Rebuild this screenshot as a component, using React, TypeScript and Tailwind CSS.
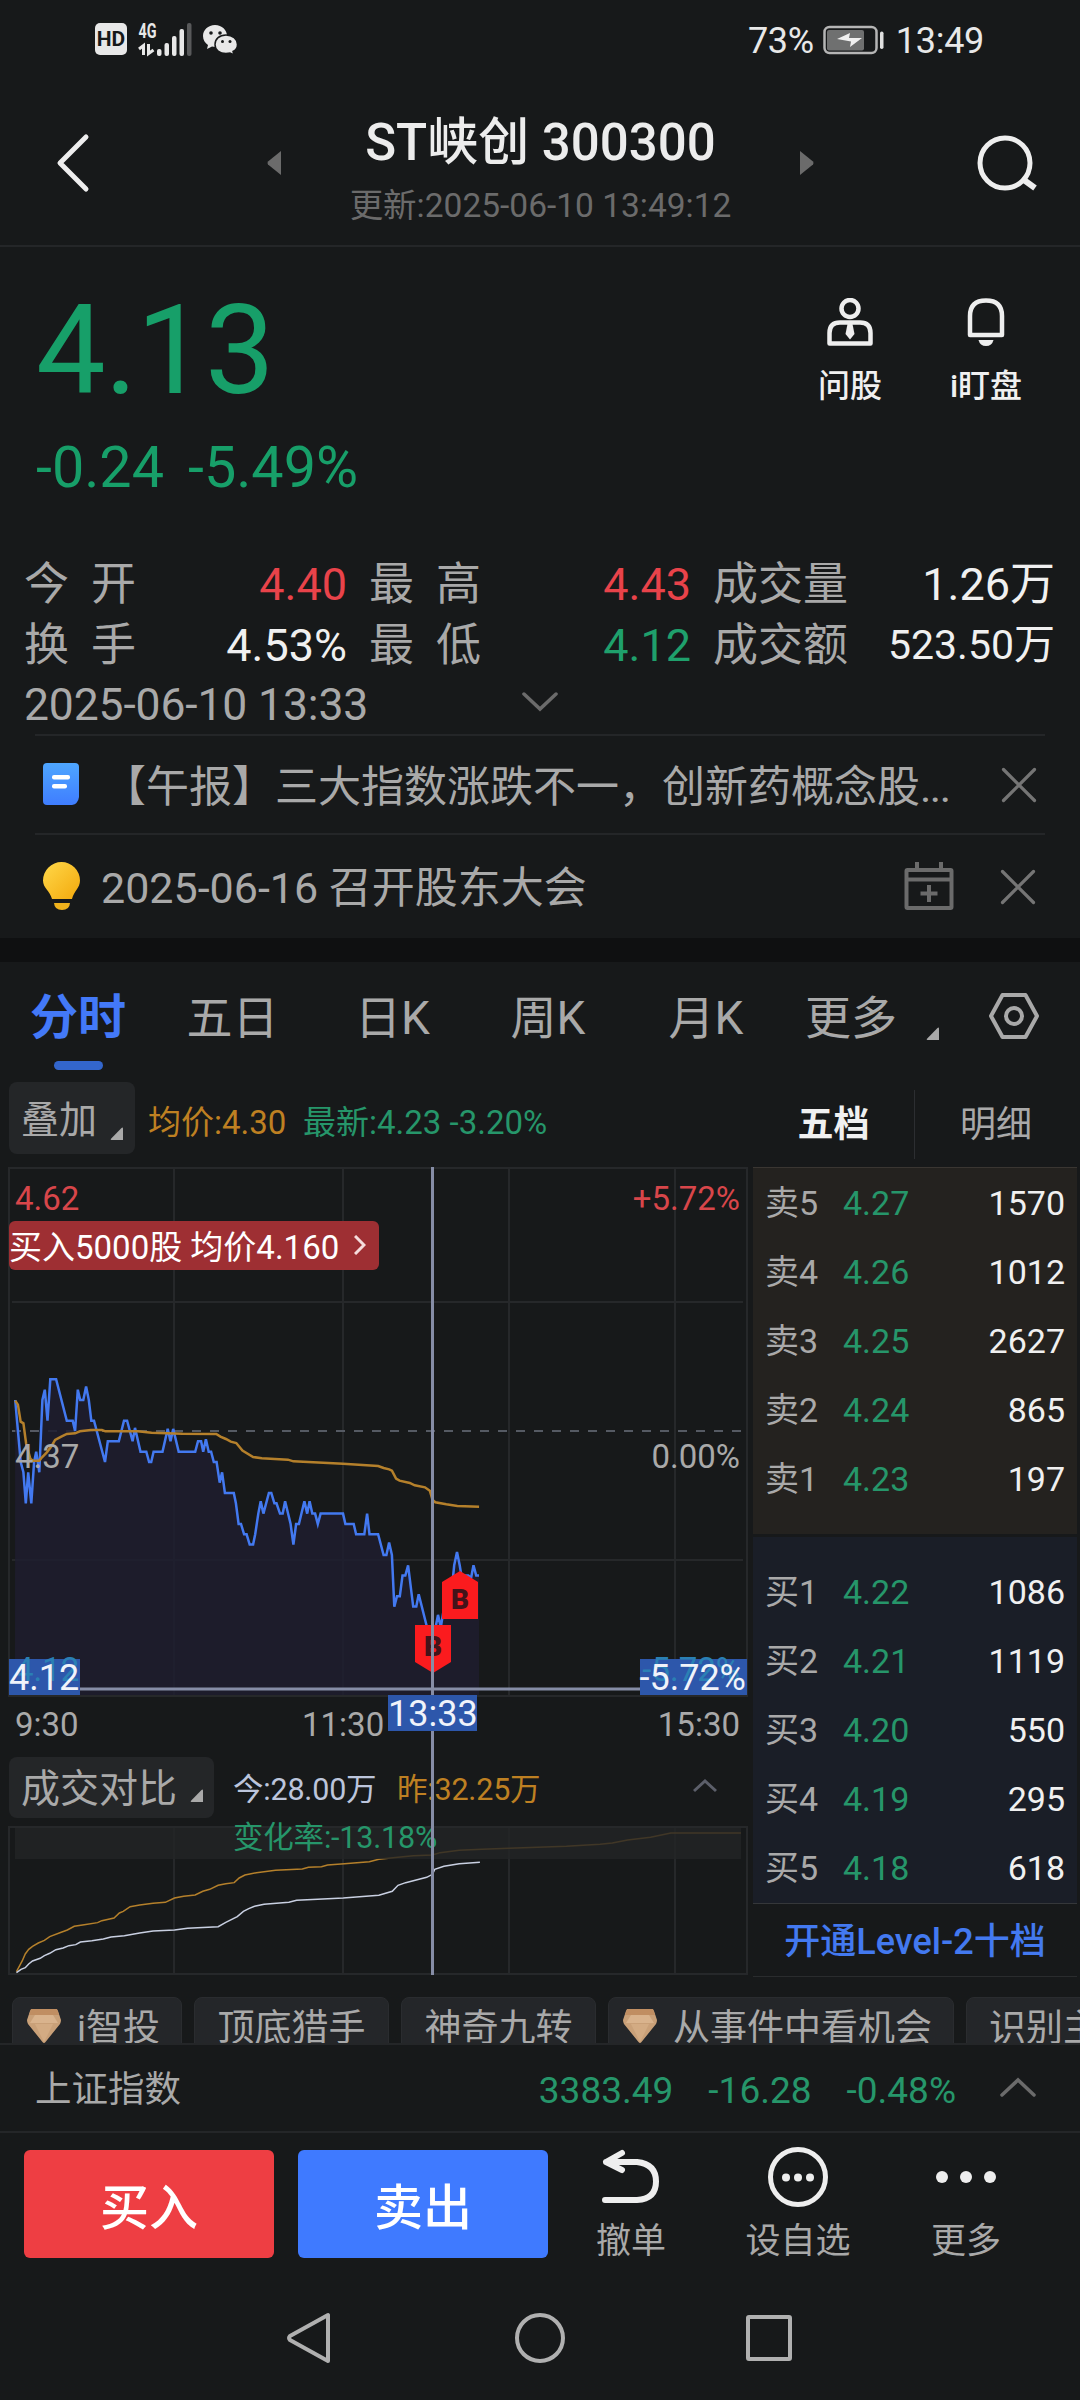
import React from 'react';
import clsx from 'clsx';

const stats = [
  [
    { label: '今开', value: '4.40', color: 'text-[#e9434a]' },
    { label: '最高', value: '4.43', color: 'text-[#e9434a]' },
    { label: '成交量', value: '1.26万', color: 'text-[#f0f0f0]' },
  ],
  [
    { label: '换手', value: '4.53%', color: 'text-[#f0f0f0]' },
    { label: '最低', value: '4.12', color: 'text-[#1fa06c]' },
    { label: '成交额', value: '523.50万', color: 'text-[#f0f0f0]', small: true },
  ],
];

const asks = [
  ['卖5', '4.27', '1570'],
  ['卖4', '4.26', '1012'],
  ['卖3', '4.25', '2627'],
  ['卖2', '4.24', '865'],
  ['卖1', '4.23', '197'],
];

const bids = [
  ['买1', '4.22', '1086'],
  ['买2', '4.21', '1119'],
  ['买3', '4.20', '550'],
  ['买4', '4.19', '295'],
  ['买5', '4.18', '618'],
];

// [x, price in cents]
const prices: [number, number][] = [
  [44, 440], [60, 434], [68, 433], [75, 430], [82, 433], [91, 430], [99, 434], [105, 435], [114, 433], [123, 440],
  [130, 441], [138, 438], [146, 442], [163, 442], [194, 438], [211, 438], [218, 437], [226, 441], [233, 440], [242, 440],
  [250, 441.3], [258, 440], [265, 438], [273, 438], [305, 434], [313, 436], [345, 436], [360, 438], [369, 438], [385, 436],
  [392, 437.3], [408, 435], [425, 435], [433, 434], [439, 434], [446, 435], [472, 435], [487, 437.2], [495, 436], [503, 437.2],
  [519, 435], [567, 435], [575, 436], [584, 436], [590, 435], [598, 436.2], [606, 435], [613, 435], [621, 434], [629, 434],
  [638, 432], [645, 433], [653, 431], [679, 431], [685, 430], [693, 428], [700, 428], [709, 427], [716, 427], [725, 426],
  [735, 426], [741, 427], [750, 429], [757, 430.2], [765, 429], [781, 431], [788, 431], [797, 430], [803, 430], [813, 429],
  [821, 429], [828, 430.2], [844, 428], [852, 426], [860, 428], [868, 428], [884, 430.2], [892, 429], [899, 430.2], [907, 429],
  [915, 429], [923, 428], [931, 429], [996, 429], [1003, 428], [1027, 428], [1034, 427], [1058, 427], [1066, 429], [1073, 427],
  [1098, 427], [1114, 425], [1122, 425], [1130, 426.2], [1138, 425], [1145, 420], [1153, 421], [1161, 421], [1169, 423], [1177, 423],
  [1185, 424], [1200, 420], [1209, 420], [1216, 421.2], [1240, 418], [1256, 416], [1265, 418], [1272, 419.2], [1280, 418], [1290, 420],
  [1310, 421], [1319, 424], [1327, 425.3], [1335, 424], [1340, 423], [1360, 423], [1368, 422.8], [1375, 424], [1383, 423], [1391, 423],
];

const priceLine = prices
  .map(([x, p]) => `${(x / 2.904).toFixed(1)},${(264 + (437 - p) * 10.33).toFixed(1)}`)
  .join(' ');

const averageLine =
  '44,92 52,104 60,155 68,160 76,222 88,266 96,272 114,272 122,262 136,247 150,228 160,210 178,200 194,192 218,190 232,184 264,180 296,180 306,184 400,184 440,188 530,191 628,192 640,200 656,207 670,215 686,219 704,242 735,261 760,265 836,269 852,274 996,281 1098,288 1114,294 1130,298 1138,302 1150,326 1160,332 1190,339 1204,346 1234,352 1248,362 1256,390 1264,397 1296,403 1328,408 1391,410';

const yesterdayLine =
  '43,695 50,680 58,663 66,642 75,628 85,619 100,609 116,601 130,590 160,577 176,570 194,559 220,554 255,548 266,542 298,534 312,519 322,514 340,500 365,495 400,490 432,487 456,474 480,469 510,465 530,454 548,448 570,436 590,431 612,428 625,414 640,405 670,398 720,391 790,387 806,382 840,380 856,375 900,371 965,365 990,358 1040,352 1080,347 1130,345 1150,338 1200,331 1260,328 1330,325 1480,319 1568,313 1600,309 1640,300 1700,292 1753,279 1936,279';

const todayLine =
  '43,698 55,688 66,683 75,672 85,663 105,655 116,647 130,640 146,629 165,624 180,617 198,614 210,606 240,602 270,597 290,591 325,587 365,579 400,573 456,570 490,565 570,560 590,547 620,530 636,514 650,506 665,499 690,493 755,487 775,481 830,478 897,474 990,466 1025,454 1040,436 1060,428 1095,418 1115,412 1130,403 1136,388 1160,379 1200,371 1254,367';

const Corner = ({ className }: { className?: string }) => (
  <svg viewBox="0 0 13 13" className={clsx('w-[13px] h-[13px] fill-[#a9a9a9]', className)}>
    <path d="M13 1.5V13H1.5Q0 13 1 11.800L11.500 1Q13 0 13 1.500Z" />
  </svg>
);

const Cross = () => (
  <svg viewBox="0 0 36 36" className="w-9 h-9" fill="none" stroke="#757575" strokeWidth="3.200" strokeLinecap="round">
    <path d="M2.500 2.500L33.500 33.500M33.500 2.500L2.500 33.500" />
  </svg>
);

const Gem = () => (
  <svg viewBox="0 0 34 34" className="w-[34px] h-[34px] mr-4 mt-[-1px]">
    <path d="M5 0H29Q30 0 31 2L34 11Q34 13 33 15L18.500 33Q17 35 15.500 33L1 15Q0 13 0 11L3 2Q4 0 5 0Z" fill="#c9a078" />
    <path d="M4 0H30L32 6H2Z" fill="#c08e62" />
    <path d="M8 6H26L31 14H3Z" fill="#d9b38d" />
    <path d="M8 15H26L17 33Z" fill="#d3ab83" />
  </svg>
);

const StatusBar = () => (
  <div className="h-20 flex items-center pl-[95px] pr-[96px] text-[#e8e8e8]">
    <div className="w-8 h-8 mt-[-2px] rounded-[5px] bg-[#e8e8e8] text-[#17191a] text-[21px] font-bold leading-none flex items-center justify-center">
      HD
    </div>
    <svg viewBox="0 0 54 34" className="w-[54px] h-[34px] ml-[11px] mt-[-3px] overflow-visible">
      <text x="0.500" y="15.500" fontSize="20" fontWeight="700" textLength="18" lengthAdjust="spacingAndGlyphs" fill="#e8e8e8" fontFamily="Roboto, sans-serif">4G</text>
      <path d="M1 27L5.500 23.500V33" fill="none" stroke="#e8e8e8" strokeWidth="3" />
      <path d="M10.500 22V31.500L15.500 28" fill="none" stroke="#e8e8e8" strokeWidth="3" />
      <rect x="19" y="27" width="4.500" height="7" rx="2" fill="#e8e8e8" />
      <rect x="26.500" y="21" width="4.500" height="13" rx="2" fill="#e8e8e8" />
      <rect x="34" y="14" width="4.500" height="20" rx="2" fill="#e8e8e8" />
      <rect x="41.500" y="7" width="4.500" height="27" rx="2" fill="#e8e8e8" />
      <rect x="49" y="1" width="4.500" height="33" rx="2" fill="#58595a" />
    </svg>
    <svg viewBox="0 0 35 30" className="w-[35px] h-[30px] ml-[11px]">
      <path d="M12 0C5 0 0 5 0 11C0 15 2 18 5 20L4 24L9 21.500L12 22C19 22 24 17 24 11S19 0 12 0Z" fill="#e8e8e8" />
      <path d="M23 10C16.500 10 12 14 12 19.500S16.500 28.500 23 28.500L27 28L31 30L30 26.500C33 25 34.500 22 34.500 19.500C34.500 14 29.500 10 23 10Z" fill="#e8e8e8" stroke="#17191a" strokeWidth="1.500" />
      <g fill="#17191a">
        <circle cx="8" cy="8" r="1.800" />
        <circle cx="17" cy="8" r="1.800" />
        <circle cx="19.500" cy="16.500" r="1.500" />
        <circle cx="27" cy="16.500" r="1.500" />
      </g>
    </svg>
    <span className="ml-auto text-[36px] leading-none tracking-[-0.300px] mt-[2px]">73%</span>
    <svg viewBox="0 0 62 30" className="w-[62px] h-[30px] ml-[9px] mr-[11px]">
      <rect x="1.500" y="2" width="52" height="26" rx="5" fill="none" stroke="#b5b5b5" strokeWidth="2.500" />
      <rect x="4" y="5" width="37" height="20.500" rx="2" fill="#6f7070" />
      <path d="M14 14L27 8L26 13H39L27 22L28 16.500Z" fill="#f0f0f0" />
      <rect x="57" y="6.500" width="3.500" height="17.500" rx="1.700" fill="#e0e0e0" />
    </svg>
    <span className="text-[36px] leading-none tracking-[-0.300px] mt-[2px]">13:49</span>
  </div>
);

const Header = () => (
  <div className="h-[167px] flex items-center px-[43px] border-b-2 border-[#242628]">
    <svg viewBox="0 0 60 60" className="w-[60px] h-[60px] ml-[3px]" fill="none" stroke="#eeeeee" strokeWidth="5" strokeLinecap="round" strokeLinejoin="round">
      <path d="M40 4L14 30L40 56" />
    </svg>
    <svg viewBox="0 0 14 24" className="w-[14px] h-6 ml-[161px]" fill="#6b6b6b">
      <path d="M14 0V24L1 13.500Q0 12 1 10.500Z" />
    </svg>
    <div className="flex-1 flex flex-col items-center pt-3">
      <h1 className="text-[51px] h-[74px] leading-[74px] font-medium text-[#ececec] whitespace-nowrap">ST峡创 300300</h1>
      <div className="text-[33.500px] h-[52px] leading-[52px] text-[#6b6b6b] whitespace-nowrap">更新:2025-06-10 13:49:12</div>
    </div>
    <svg viewBox="0 0 14 24" className="w-[14px] h-6 mr-[163px]" fill="#6b6b6b">
      <path d="M0 0V24L13 13.500Q14 12 13 10.500Z" />
    </svg>
    <svg viewBox="0 0 60 56" className="w-[60px] h-14" fill="none" stroke="#eeeeee" strokeWidth="5" strokeLinecap="round">
      <circle cx="28" cy="28" r="25" />
      <path d="M47 45L58 53" strokeWidth="6" strokeLinecap="butt" />
    </svg>
  </div>
);

const Quote = () => (
  <div className="h-[307px] flex justify-between pl-[36px] pr-[54px]">
    <div className="text-[#179f69]">
      <div className="text-[124px] leading-none pt-[42px] tracking-[-1px]">4.13</div>
      <div className="text-[57.500px] leading-none pt-[26px] flex gap-[24px]">
        <span>-0.24</span>
        <span>-5.49%</span>
      </div>
    </div>
    <div className="flex gap-[56px] pt-[51px] text-[#f0f0f0]">
      <div className="w-[80px] flex flex-col items-center">
        <svg viewBox="0 0 46 48" className="w-[46px] h-12" fill="none" stroke="#eeeeee" strokeWidth="4.500">
          <circle cx="23" cy="10.500" r="8.500" />
          <path d="M2.500 45.500V35Q2.500 24.500 13 24.500H33Q43.500 24.500 43.500 35V45.500Z" strokeLinejoin="round" />
          <path d="M20.500 26H25.500L27.500 36L23 41.500L18.500 36Z" fill="#eeeeee" stroke="none" />
        </svg>
        <div className="text-[32px] font-medium leading-none mt-[24px] whitespace-nowrap">问股</div>
      </div>
      <div className="w-[80px] flex flex-col items-center">
        <svg viewBox="0 0 38 48" className="w-[38px] h-12" fill="none" stroke="#eeeeee" strokeWidth="4.500" strokeLinejoin="round">
          <path d="M3 37V18Q3 2.500 19 2.500T35 18V37Z" />
          <path d="M11.500 42H26.500Q25 48 19 48T11.500 42Z" fill="#eeeeee" stroke="none" />
        </svg>
        <div className="text-[32px] font-medium leading-none mt-[24px] whitespace-nowrap">i盯盘</div>
      </div>
    </div>
  </div>
);

const Stats = () => (
  <div className="h-[180px] px-[24px]">
    {stats.map((row, i) => (
      <div key={i} className="h-[61px] grid grid-cols-[323px_322px_342px] gap-[22px] text-[45px] leading-none">
        {row.map((s) => (
          <div key={s.label} className="flex justify-between items-center whitespace-nowrap">
            <span className={clsx('text-[#a9a9a9] flex', s.label.length === 2 && 'gap-[22px]')}>
              {s.label.split('').map((c) => (
                <span key={c}>{c}</span>
              ))}
            </span>
            <span className={clsx(s.color, s.small ? 'text-[41px]' : 'text-[45px]')}>{s.value}</span>
          </div>
        ))}
      </div>
    ))}
    <div className="h-[58px] flex items-center text-[44.500px] leading-none text-[#a9a9a9]">
      <span className="w-[498px] tracking-[-0.150px]">2025-06-10 13:33</span>
      <svg viewBox="0 0 36 20" className="w-9 h-5 mt-[-6px]" fill="none" stroke="#6b6b6b" strokeWidth="3.500" strokeLinecap="round">
        <path d="M2 2L18 17L34 2" />
      </svg>
    </div>
  </div>
);

const News = () => (
  <div className="h-[204px] px-[35px] text-[43px] leading-none text-[#a9a9a9]">
    <div className="h-[99px] border-t-2 border-[#242628] flex items-center pl-2 pr-[8px]">
      <svg viewBox="0 0 36 42" className="w-9 h-[42px] mb-[2px]">
        <defs>
          <linearGradient id="doc" x1="0" y1="0" x2="0" y2="1">
            <stop offset="0" stopColor="#4ea6ff" />
            <stop offset="1" stopColor="#3f7dff" />
          </linearGradient>
        </defs>
        <path d="M4 0H32Q36 0 36 4V34Q35 41 29 42H4Q0 42 0 38V4Q0 0 4 0Z" fill="url(#doc)" />
        <rect x="9" y="12" width="18" height="4.500" rx="2" fill="#fff" />
        <rect x="9" y="21" width="15" height="4.500" rx="2" fill="#fff" />
      </svg>
      <span className="flex-1 ml-[24px] pt-[5px] whitespace-nowrap">
        【午报】三大指数涨跌不一，创新药概念股<span className="tracking-[-1.500px]">...</span>
      </span>
      <Cross />
    </div>
    <div className="h-[105px] border-t-2 border-[#242628] flex items-center pl-2 pr-[9px]">
      <svg viewBox="0 0 37 48" className="w-[37px] h-12 mb-[2px]">
        <defs>
          <linearGradient id="bulb" x1="0" y1="0" x2="1" y2="1">
            <stop offset="0" stopColor="#ffd84a" />
            <stop offset="1" stopColor="#f3a90c" />
          </linearGradient>
        </defs>
        <path d="M18.500 0A18.500 18.500 0 0 1 37 18.500C37 26 31 29 29 37H9C7 29 0 26 0 18.500A18.500 18.500 0 0 1 18.500 0Z" fill="url(#bulb)" />
        <path d="M11 41H27Q26.500 48 19 48T11 41Z" fill="#f0b21c" />
      </svg>
      <span className="flex-1 ml-[21px] pt-[4px] whitespace-nowrap">2025-06-16 召开股东大会</span>
      <svg viewBox="0 0 50 48" className="w-[50px] h-12 mr-[46px] mb-px" fill="none" stroke="#6b6b6b" strokeWidth="4">
        <rect x="2.500" y="8" width="45" height="38" rx="1" />
        <path d="M2 17.500H48M13 0V8M37 0V8M25 23V40M16.500 31.500H33.500" />
      </svg>
      <Cross />
    </div>
  </div>
);

const Tabs = () => (
  <div className="h-[120px] flex text-[46px] leading-[112px] text-[#a9a9a9]">
    <div className="w-[156px] flex flex-col items-center text-[#4379f8] font-bold">
      <span className="h-[99px] text-[48px]">分时</span>
      <span className="w-[49px] h-[9px] rounded-full bg-[#3366cc]" />
    </div>
    <div className="w-[153px] text-center">五日</div>
    <div className="w-[167px] text-center">日K</div>
    <div className="w-[144px] text-center">周K</div>
    <div className="w-[172px] text-center">月K</div>
    <div className="w-[118px] text-center">更多</div>
    <Corner className="mt-[65px] ml-4" />
    <svg viewBox="0 0 50 46" className="w-[50px] h-[46px] ml-[50px] mt-[31px]" fill="none" stroke="#a9a9a9" strokeWidth="4" strokeLinejoin="round">
      <path d="M13.500 2H36.500L48 23L36.500 44H13.500L2 23Z" />
      <circle cx="25" cy="23" r="8" />
    </svg>
  </div>
);

const PriceChart = () => (
  <div className="relative h-[564px]">
    <svg viewBox="0 0 752 530" className="block w-[752px] h-[530px]" fill="none">
      <g stroke="#26282a" strokeWidth="2">
        <rect x="9" y="1" width="738" height="528" />
        <path d="M174 1V529M343 1V529M509 1V529M675 1V529M12 135H743M12 393H743" />
      </g>
      <path d="M12 264H741" stroke="#555a63" strokeWidth="2" strokeDasharray="9 9" />
      <polygon points={`15,528 ${priceLine} 479,528`} fill="#1e1d2f" fillOpacity="0.850" />
      <polyline points={priceLine} stroke="#4379f0" strokeWidth="2.500" />
      <g transform="translate(0 203) scale(0.3444 0.3333)">
        <polyline points={averageLine} stroke="#b5802b" strokeWidth="2.500" vectorEffect="non-scaling-stroke" />
      </g>
      <path d="M442 415L460 404L478 415V452H442Z" fill="#fb1b1e" />
      <path d="M415 458H451V495L433 506L415 495Z" fill="#fb1b1e" />
      <g fill="#43131a" fontSize="28" fontWeight="900" fontFamily="Roboto, sans-serif" textAnchor="middle">
        <text x="460" y="442">B</text>
        <text x="433" y="489">B</text>
      </g>
      <path d="M12 522H743" stroke="#868da6" strokeWidth="3" />
    </svg>
    <div className="absolute inset-0 text-[33px] leading-none text-[#a9a9a9]">
      <span className="absolute left-[15px] top-[15px] text-[#d8464a]">4.62</span>
      <span className="absolute right-[12px] top-[15px] text-[#d8464a]">+5.72%</span>
      <span className="absolute left-[15px] top-[273px]">4.37</span>
      <span className="absolute right-[12px] top-[273px]">0.00%</span>
      <span className="absolute left-[9px] top-[492px] h-9 w-[71px] bg-[#2d57ab]" />
      <span className="absolute right-[5px] top-[492px] h-9 w-[107px] bg-[#2d57ab]" />
      <span className="absolute left-[15px] top-[486px] text-[#2a80b4]">4.12</span>
      <span className="absolute right-[12px] top-[486px] text-[#2a80b4]">-5.72%</span>
      <span className="absolute left-[9px] top-[493px] text-[36px] leading-9 text-[#f0f3fa]">4.12</span>
      <span className="absolute right-[6px] top-[493px] text-[36px] leading-9 text-[#f0f3fa]">-5.72%</span>
      <span className="absolute left-[15px] top-[541px]">9:30</span>
      <span className="absolute left-[302px] top-[541px]">11:30</span>
      <span className="absolute right-[12px] top-[541px]">15:30</span>
      <div className="absolute left-[9px] top-[54px] w-[370px] h-[49px] rounded-md bg-[#9e2f33] text-white text-[33px] flex items-center whitespace-nowrap">
        <span className="pt-1">买入5000股 均价4.160</span>
        <svg viewBox="0 0 12 20" className="w-3 h-5 ml-[15px] mb-[2px]" fill="none" stroke="#f5dcdc" strokeWidth="3">
          <path d="M1 1L10 10L1 19" />
        </svg>
      </div>
    </div>
  </div>
);

const VolumeCompare = () => (
  <div className="h-[248px]">
    <div className="h-[95px] pt-[26px] pl-[9px] flex text-[30.500px] leading-none">
      <div className="w-[205px] h-[61px] rounded-lg bg-[#242628] text-[#a9a9a9] text-[39px] flex items-center pl-3 shrink-0">
        <span className="pt-1">成交对比</span>
        <Corner className="ml-[13px] mt-4" />
      </div>
      <span className="ml-[19px] mt-[18px] w-[164px] text-[#bcc5dc] tracking-[-0.200px] whitespace-nowrap">今:28.00万</span>
      <span className="mt-[18px] text-[#be8022] tracking-[-0.200px] whitespace-nowrap">昨:32.25万</span>
      <svg viewBox="0 0 24 14" className="w-6 h-[14px] ml-auto mr-[35px] mt-[22px]" fill="none" stroke="#5c5f6a" strokeWidth="3">
        <path d="M1 12L12 2L23 12" />
      </svg>
    </div>
    <div className="relative">
      <svg viewBox="0 0 752 150" className="block w-[752px] h-[150px]" fill="none">
        <g stroke="#26282a" strokeWidth="2">
          <rect x="9" y="1" width="738" height="147" />
          <path d="M174 1V148M343 1V148M509 1V148M675 1V148" />
        </g>
        <g transform="translate(0 -86) scale(0.3827 0.3333)">
          <polyline points={yesterdayLine} stroke="#b5802b" strokeWidth="1.500" vectorEffect="non-scaling-stroke" />
          <polyline points={todayLine} stroke="#c9d0e2" strokeWidth="1.500" vectorEffect="non-scaling-stroke" />
        </g>
        <rect x="15" y="2" width="726" height="31" fill="#232426" fillOpacity="0.800" />
      </svg>
      <span className="absolute left-[233px] top-[-3px] text-[30.500px] leading-none tracking-[-0.200px] text-[#26966a] whitespace-nowrap">变化率:-13.18%</span>
    </div>
  </div>
);

const Level = ({ row }: { row: string[] }) => (
  <div className="h-[69px] flex items-center pl-[12px] pr-[12px] text-[34px] leading-none">
    <span className="w-[78px] text-[#a9a9a9]">{row[0]}</span>
    <span className="text-[#26966a]">{row[1]}</span>
    <span className="ml-auto text-[#f0f0f0]">{row[2]}</span>
  </div>
);

const OrderBook = () => (
  <div className="w-[324px] ml-px leading-none">
    <div className="h-[85px] flex text-[36px] leading-[86px] text-[#a9a9a9]">
      <div className="w-[161px] text-center text-[#f0f0f0] font-bold">五档</div>
      <div className="w-px h-[69px] mt-2 bg-[#2c2e31]" />
      <div className="flex-1 text-center">明细</div>
    </div>
    <div className="h-[367px] border-t border-[#3a3632] bg-[#24221f]">
      {asks.map((r) => (
        <Level key={r[0]} row={r} />
      ))}
    </div>
    <div className="h-[367px] mt-[3px] pt-[20px] border-b border-[#35373a] bg-[#1a1e27]">
      {bids.map((r) => (
        <Level key={r[0]} row={r} />
      ))}
    </div>
    <div className="h-[73px] border-b border-[#2a2c2e] text-[36px] leading-[77px] font-medium text-center text-[#4379f0] whitespace-nowrap">
      开通Level-2十档
    </div>
  </div>
);

const Chip = ({ text, gem, className }: { text: string; gem?: boolean; className: string }) => (
  <div className={clsx('h-[70px] shrink-0 rounded-lg bg-[#242629] border border-[#2a2c2f] flex pt-[12px] whitespace-nowrap', className)}>
    {gem && <Gem />}
    <span className="leading-[38px]">{text}</span>
  </div>
);

const Action = ({ label, className, children }: { label: string; className: string; children: React.ReactNode }) => (
  <div className={clsx('flex flex-col items-center', className)}>
    <div className="h-[76px] flex items-center">{children}</div>
    <span className="text-[35px] leading-none mt-[9px] text-[#a9a9a9] whitespace-nowrap">{label}</span>
  </div>
);

export default function App() {
  return (
    <div className="w-[1080px] h-[2400px] overflow-hidden bg-[#17191a] font-[Roboto,'Noto_Sans_CJK_SC',sans-serif]">
      <StatusBar />
      <Header />
      <Quote />
      <Stats />
      <News />
      <div className="h-6 bg-[#0f1011]" />
      <Tabs />

      {/* Chart and order book */}
      <div className="flex h-[897px]">
        <div className="relative w-[752px]">
          <div className="h-[85px] flex pl-[9px] text-[33px] leading-none whitespace-nowrap">
            <div className="w-[126px] h-[72px] rounded-lg bg-[#242628] text-[38px] text-[#a9a9a9] flex items-center pl-[12px]">
              <span className="pt-1">叠加</span>
              <Corner className="ml-[13px] mt-[30px]" />
            </div>
            <span className="ml-[13px] mt-6 w-[155px] text-[#be8022]">均价:4.30</span>
            <span className="mt-6 text-[#26966a]">最新:4.23 -3.20%</span>
          </div>
          <PriceChart />
          <VolumeCompare />
          {/* Crosshair */}
          <div className="absolute left-[431px] top-[85px] bottom-[4px] w-[3px] bg-[#868da6]" />
          <div className="absolute left-[388px] top-[613px] w-[89px] h-9 bg-[#2d57ab] text-[#f0f3fa] text-[36px] leading-[38px] text-center">
            13:33
          </div>
        </div>
        <OrderBook />
      </div>

      {/* Indicator chips */}
      <div className="h-[66px] pt-[18px] pl-3 flex gap-3 overflow-hidden text-[37px] text-[#a9a9a9] border-b-2 border-[#242628]">
        <Chip gem text="i智投" className="w-[170px] pl-[14px]" />
        <Chip text="顶底猎手" className="w-[195px] justify-center" />
        <Chip text="神奇九转" className="w-[195px] justify-center" />
        <Chip gem text="从事件中看机会" className="w-[346px] pl-[14px]" />
        <Chip text="识别主力" className="w-[195px] pl-[22px]" />
      </div>

      <div className="h-[88px] border-b-2 border-[#242628] flex items-center pl-[35px] pr-[44px] text-[37px] leading-none text-[#26966a]">
        <span className="text-[#a9a9a9] mr-auto pt-[5px] text-[36.500px]">上证指数</span>
        <span className="pt-[5px]">3383.49</span>
        <span className="ml-[35px] pt-[5px]">-16.28</span>
        <span className="ml-[35px] pt-[5px]">-0.48%</span>
        <svg viewBox="0 0 36 20" className="w-9 h-5 ml-[44px] mt-[-3px]" fill="none" stroke="#6b6b6b" strokeWidth="3.500" strokeLinecap="round">
          <path d="M2 18L18 3L34 18" />
        </svg>
      </div>

      {/* Trade actions */}
      <div className="h-[148px] flex pl-6 pt-[17px]">
        <div className="w-[250px] h-[108px] rounded-md bg-[#ee3e43] text-white text-[49px] font-medium leading-[117px] text-center">买入</div>
        <div className="w-[250px] h-[108px] ml-6 rounded-md bg-[#3f7aff] text-white text-[49px] font-medium leading-[117px] text-center">卖出</div>
        <div className="flex mt-[-11px] ml-[33px]">
          <Action label="撤单" className="w-[100px]">
            <svg viewBox="0 0 58 56" className="w-[58px] h-14" fill="none" stroke="#eeeeee" strokeWidth="6" strokeLinecap="round" strokeLinejoin="round">
              <path d="M20 4L4 13L20 21M4 13H35Q54 15 54 32.500T35 51H3" />
            </svg>
          </Action>
          <Action label="设自选" className="w-[120px] ml-[57px]">
            <svg viewBox="0 0 60 60" className="w-[60px] h-[60px]" fill="#eeeeee">
              <circle cx="30" cy="30" r="27.500" fill="none" stroke="#eeeeee" strokeWidth="5" />
              <circle cx="18" cy="30.500" r="4" />
              <circle cx="30" cy="30.500" r="4" />
              <circle cx="42" cy="30.500" r="4" />
            </svg>
          </Action>
          <Action label="更多" className="w-[100px] ml-[58px]">
            <svg viewBox="0 0 60 12" className="w-[60px] h-3" fill="#eeeeee">
              <circle cx="6" cy="6" r="6" />
              <circle cx="30" cy="6" r="6" />
              <circle cx="54" cy="6" r="6" />
            </svg>
          </Action>
        </div>
      </div>

      {/* System navigation */}
      <div className="h-[117px] flex items-center justify-center mt-[-2px]">
        <svg viewBox="0 0 506 52" className="w-[506px] h-[52px]" fill="none" stroke="#b0b0b0" strokeWidth="4" strokeLinejoin="round">
          <path d="M41 3V49L3 28Q1 26 3 24Z" />
          <circle cx="253" cy="26" r="23" />
          <rect x="461" y="5" width="42" height="42" rx="1" />
        </svg>
      </div>
    </div>
  );
}
